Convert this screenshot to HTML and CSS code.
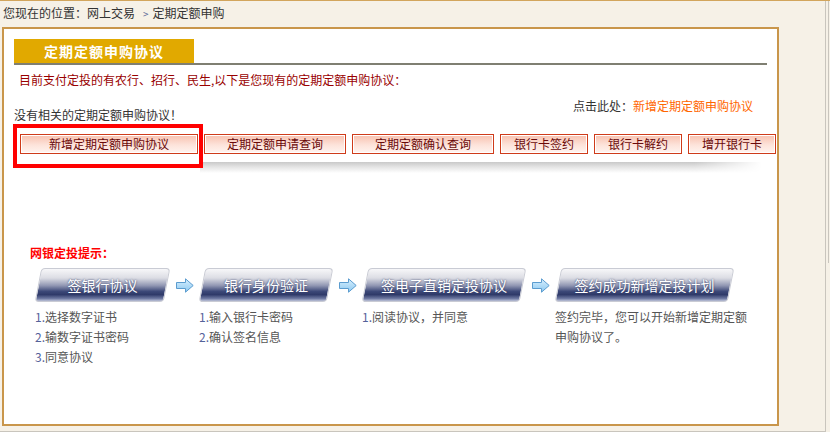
FILE: index.html
```html
<!DOCTYPE html>
<html lang="zh-CN">
<head>
    <meta charset="UTF-8">
    <title>定期定额申购</title>
    <link rel="stylesheet" href="styles.css">
</head>
<body>
    <div class="frame">
        <div class="crumb">您现在的位置：网上交易<span class="crumb-sep">&gt;</span>定期定额申购</div>

        <div class="panel">
            <div class="tab-bar">
                <div class="tab">定期定额申购协议</div>
            </div>

            <p class="bank-note">目前支付定投的有农行、招行、民生,以下是您现有的定期定额申购协议：</p>

            <div class="info-row">
                <span class="empty-note">没有相关的定期定额申购协议！</span>
                <span class="add-link">点击此处：<a href="#">新增定期定额申购协议</a></span>
            </div>

            <div class="btn-row">
                <a class="btn w-178" href="#">新增定期定额申购协议</a>
                <a class="btn w-142" href="#">定期定额申请查询</a>
                <a class="btn w-142" href="#">定期定额确认查询</a>
                <a class="btn w-88" href="#">银行卡签约</a>
                <a class="btn w-88" href="#">银行卡解约</a>
                <a class="btn w-88" href="#">增开银行卡</a>
            </div>
            <div class="btn-shadow"></div>

            <div class="hint-title">网银定投提示：</div>

            <div class="steps">
                <div class="step step-1">
                    <div class="badge">签银行协议</div>
                    <ol class="step-list">
                        <li><span class="num">1.</span>选择数字证书</li>
                        <li><span class="num">2.</span>输数字证书密码</li>
                        <li><span class="num">3.</span>同意协议</li>
                    </ol>
                </div>
                <div class="arrow"><svg width="18" height="15" viewBox="0 0 18 15"><defs><linearGradient id="ag" x1="0" y1="0" x2="0" y2="1"><stop offset="0" stop-color="#d8f0ff"/><stop offset="1" stop-color="#8cc8f0"/></linearGradient></defs><path d="M0.5 4.5 H9.5 V0.8 L17.2 7.5 L9.5 14.2 V10.5 H0.5 Z" fill="url(#ag)" stroke="#5b9ccf" stroke-width="1"/></svg></div>
                <div class="step step-2">
                    <div class="badge">银行身份验证</div>
                    <ol class="step-list">
                        <li><span class="num">1.</span>输入银行卡密码</li>
                        <li><span class="num">2.</span>确认签名信息</li>
                    </ol>
                </div>
                <div class="arrow"><svg width="18" height="15" viewBox="0 0 18 15"><path d="M0.5 4.5 H9.5 V0.8 L17.2 7.5 L9.5 14.2 V10.5 H0.5 Z" fill="url(#ag)" stroke="#5b9ccf" stroke-width="1"/></svg></div>
                <div class="step step-3">
                    <div class="badge">签电子直销定投协议</div>
                    <ol class="step-list">
                        <li><span class="num">1.</span>阅读协议，并同意</li>
                    </ol>
                </div>
                <div class="arrow"><svg width="18" height="15" viewBox="0 0 18 15"><path d="M0.5 4.5 H9.5 V0.8 L17.2 7.5 L9.5 14.2 V10.5 H0.5 Z" fill="url(#ag)" stroke="#5b9ccf" stroke-width="1"/></svg></div>
                <div class="step step-4">
                    <div class="badge">签约成功新增定投计划</div>
                    <p class="step-text">签约完毕，您可以开始新增定期定额申购协议了。</p>
                </div>
            </div>

            <div class="highlight"></div>
        </div>
    </div>
    <div class="scroll-edge"></div>
</body>
</html>
```

FILE: styles.css
```css
body {
    margin: 0;
    background-color: #f6f1e7;
    border-top: 1px solid #d2a55c;
    font-family: "Noto Sans CJK SC", sans-serif;
    font-size: 12px;
    color: #333;
    position: relative;
    height: 431px;
    overflow: hidden;
}

.frame {
    width: 825px;
    height: 430px;
    border-right: 1px solid #c9c5bd;
    border-bottom: 1px solid #c9c5bd;
}

.scroll-edge {
    position: absolute;
    top: 0;
    left: 828px;
    width: 1px;
    height: 262px;
    background: #c9c5bd;
}

.crumb {
    height: 24px;
    line-height: 24px;
    padding-left: 3px;
    white-space: nowrap;
}

.crumb-sep {
    font-size: 10px;
    color: #5a6a98;
    margin: 0 4px 0 8px;
}

.panel {
    position: relative;
    box-sizing: border-box;
    width: 777px;
    height: 399px;
    margin: 2px 0 0 2px;
    padding: 10px 10px 0 10px;
    background: #fff;
    border: 2px solid #c9964b;
}

.tab-bar {
    border-bottom: 2px solid #7f7f72;
}

.tab {
    width: 180px;
    height: 24px;
    line-height: 24px;
    text-align: center;
    background: #e1a900;
    color: #fff;
    font-size: 14px;
    font-weight: bold;
    letter-spacing: 1px;
}

.bank-note {
    margin: 5px 0 0 5px;
    line-height: 20px;
    color: #990000;
}

.info-row {
    display: flex;
    justify-content: space-between;
    align-items: flex-start;
    margin-top: 6px;
    padding-right: 14px;
    line-height: 20px;
}

.empty-note {
    margin-top: 9px;
}

.add-link a {
    color: #ff6600;
    text-decoration: none;
}

.btn-row {
    display: flex;
    gap: 6px;
    margin: 9px 0 0 6px;
}

.btn {
    flex-shrink: 0;
    box-sizing: border-box;
    height: 20px;
    line-height: 18px;
    text-align: center;
    border: 1px solid #cf3b1a;
    box-shadow: inset 0 0 0 1px #fff;
    background: linear-gradient(to bottom, #f8c0ae, #fde3da 55%, #fff4f0);
    color: #6a0a0a;
    text-decoration: none;
    white-space: nowrap;
}

.w-178 { width: 178px; }
.w-142 { width: 142px; }
.w-88 { width: 88px; }

.btn-shadow {
    width: 562px;
    height: 11px;
    margin: 8px 0 0 186px;
    background: linear-gradient(to bottom, #c9c9c9, #e4e4e4 45%, #fff);
    -webkit-mask-image: linear-gradient(to right, #000 88%, transparent);
    mask-image: linear-gradient(to right, #000 88%, transparent);
}

.hint-title {
    margin: 70px 0 0 16px;
    line-height: 20px;
    color: #ff0000;
    font-weight: bold;
}

.steps {
    display: flex;
    align-items: flex-start;
    margin: 5px 0 0 21px;
}

.step-1 { width: 135px; }
.step-2 { width: 134px; }
.step-3 { width: 164px; }
.step-4 { width: 198px; }
.step-4 .badge { width: 179px; }

.arrow {
    width: 29px;
    height: 34px;
    display: flex;
    align-items: center;
    justify-content: center;
}

.badge {
    position: relative;
    height: 34px;
    line-height: 34px;
    text-align: center;
    color: #fff;
    font-size: 14px;
    text-shadow: 0 0 2px #2a3560;
    z-index: 0;
    white-space: nowrap;
}

.badge::before {
    content: "";
    position: absolute;
    top: 0;
    bottom: 0;
    left: 3px;
    right: 3px;
    border: 1px solid #c9cbd4;
    border-radius: 4px;
    transform: skewX(-11deg);
    background: linear-gradient(to bottom, #f7f7f9 0%, #dcdde4 28%, #9096b2 52%, #3c4878 70%, #2f3a69 80%, #6c77a0 92%, #b9bfd6 100%);
    z-index: -1;
}

.step-list {
    list-style: none;
    margin: 5px 0 0;
    padding: 0;
    line-height: 20px;
    color: #555;
}

.num {
    color: #55629a;
}

.step-text {
    margin: 5px 0 0;
    line-height: 20px;
    color: #555;
}

.highlight {
    position: absolute;
    left: 9px;
    top: 95px;
    box-sizing: border-box;
    width: 190px;
    height: 44px;
    border: 4px solid #ff0000;
}
```
